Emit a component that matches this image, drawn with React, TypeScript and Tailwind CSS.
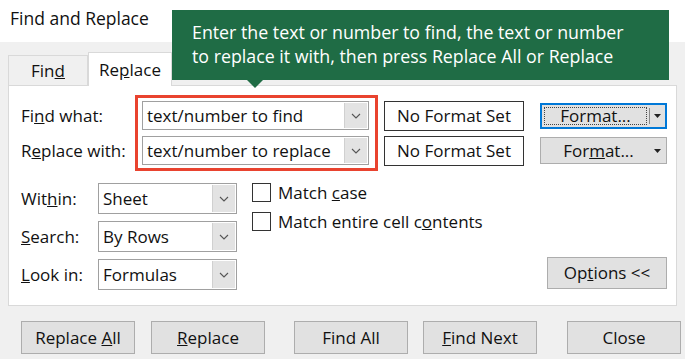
import React from 'react';

function Chevron() {
  return (
    <svg width="10" height="6" viewBox="0 0 10 6" className="block">
      <polyline points="1,1 5,5 9,1" fill="none" stroke="#555" strokeWidth="1.1" />
    </svg>
  );
}

function Caret() {
  return (
    <svg width="7" height="4" viewBox="0 0 7 4" className="block">
      <polygon points="0,0 7,0 3.5,4" fill="#222" />
    </svg>
  );
}

function Combo({ text, w, h }: { text: string; w: string; h: string }) {
  return (
    <div className={`flex ${w} ${h} bg-white border border-[#a0a0a0]`}>
      <div className="flex-1 flex items-center pl-[4px]">{text}</div>
      <div className="w-[23px] m-px bg-[#e3e3e3] border-l border-[#d0d0d0] flex items-center justify-center">
        <Chevron />
      </div>
    </div>
  );
}

function Btn({ children, className = '' }: { children: React.ReactNode; className?: string }) {
  return (
    <div className={`flex items-center justify-center bg-[#e1e1e1] border border-[#adadad] ${className}`}>
      <span>{children}</span>
    </div>
  );
}

export default function App() {
  return (
    <div className="relative w-[685px] h-[359px] overflow-hidden bg-[#f0f0f0] text-[#111] font-['Open_Sans',sans-serif] text-[17px]">
      {/* Title */}
      <div className="h-[42px] bg-white pl-[10px] pt-[5px] text-[17.5px] leading-[26px]">Find and Replace</div>

      {/* Tabs */}
      <div className="flex items-end h-[43px] px-[8px]">
        <div className="w-[80px] h-[30px] border border-b-0 border-[#d9d9d9] bg-[#f0f0f0] flex items-center justify-center">
          <span>
            Fin<u>d</u>
          </span>
        </div>
        <div className="relative z-10 -mb-px w-[84px] h-[34px] border border-b-0 border-[#d9d9d9] bg-white flex items-center justify-center">
          <span>
            Re<u>p</u>lace
          </span>
        </div>
      </div>

      {/* Panel */}
      <div className="mx-[8px] w-[669px] h-[221px] bg-white border border-[#d9d9d9] pt-[9px] pl-[12px]">
        <div className="flex">
          <div className="w-[114px] flex flex-col gap-[6px] pt-[6px]">
            <div className="h-[29px] leading-[29px]">
              Fi<u>n</u>d what:
            </div>
            <div className="h-[29px] leading-[29px]">
              R<u>e</u>place with:
            </div>
          </div>
          <div className="w-[243px] h-[76px] border-[3px] border-[#e9432f] pl-[4px] pt-[3px] flex flex-col gap-[6px]">
            <Combo text="text/number to find" w="w-[227px]" h="h-[29px]" />
            <Combo text="text/number to replace" w="w-[227px]" h="h-[29px]" />
          </div>
          <div className="ml-[6px] pt-[6px] flex flex-col gap-[5px]">
            <div className="w-[140px] h-[30px] border border-[#333] bg-white flex items-center justify-center">No Format Set</div>
            <div className="w-[140px] h-[30px] border border-[#333] bg-white flex items-center justify-center">No Format Set</div>
          </div>
          <div className="ml-[16px] pt-[8px] flex flex-col gap-[8px]">
            <div className="w-[127px] h-[26px] border-2 border-[#0078d7] bg-[#e1e1e1] flex">
              <div className="flex-1 m-[2px] border border-dotted border-[#444] flex items-center justify-center">Format...</div>
              <div className="w-px bg-[#8a8a8a] my-[3px]" />
              <div className="w-[15px] flex items-center justify-center">
                <Caret />
              </div>
            </div>
            <div className="w-[127px] h-[27px] border border-[#adadad] bg-[#e1e1e1] flex">
              <div className="flex-1 flex items-center justify-center pl-[8px]">
                <span>
                  For<u>m</u>at...
                </span>
              </div>
              <div className="w-[18px] flex items-center justify-center">
                <Caret />
              </div>
            </div>
          </div>
        </div>

        <div className="flex mt-[12px]">
          <div className="w-[77px] flex flex-col gap-[7px]">
            <div className="h-[31px] leading-[31px]">
              Wit<u>h</u>in:
            </div>
            <div className="h-[31px] leading-[31px]">
              <u>S</u>earch:
            </div>
            <div className="h-[31px] leading-[31px]">
              <u>L</u>ook in:
            </div>
          </div>
          <div className="flex flex-col gap-[7px]">
            <Combo text="Sheet" w="w-[139px]" h="h-[31px]" />
            <Combo text="By Rows" w="w-[139px]" h="h-[31px]" />
            <Combo text="Formulas" w="w-[139px]" h="h-[31px]" />
          </div>
          <div className="ml-[15px] flex flex-col gap-[10px]">
            <div className="flex items-center h-[19px]">
              <div className="w-[19px] h-[19px] border border-[#333] bg-white" />
              <span className="ml-[7px]">
                Match <u>c</u>ase
              </span>
            </div>
            <div className="flex items-center h-[19px]">
              <div className="w-[19px] h-[19px] border border-[#333] bg-white" />
              <span className="ml-[7px]">
                Match entire cell c<u>o</u>ntents
              </span>
            </div>
          </div>
          <div className="flex-1 flex justify-end items-end pr-[9px] pb-[1px]">
            <Btn className="w-[120px] h-[32px]">
              Op<u>t</u>ions &lt;&lt;
            </Btn>
          </div>
        </div>
      </div>

      {/* Bottom buttons */}
      <div className="flex mt-[15px]">
        <Btn className="ml-[21px] w-[114px] h-[33px]">
          Replace <u>A</u>ll
        </Btn>
        <Btn className="ml-[16px] w-[114px] h-[33px]">
          <u>R</u>eplace
        </Btn>
        <Btn className="ml-[29px] w-[114px] h-[33px]">Find All</Btn>
        <Btn className="ml-[15px] w-[114px] h-[33px]">
          <u>F</u>ind Next
        </Btn>
        <Btn className="ml-[30px] w-[114px] h-[33px]">Close</Btn>
      </div>

      {/* Callout */}
      <div className="absolute left-[172px] top-[10px] w-[497px] h-[70px] bg-[#1f6c45] text-white text-[17.8px] leading-[24px] pl-[20px] pt-[10px]">
        <div>Enter the text or number to find, the text or number</div>
        <div>to replace it with, then press Replace All or Replace</div>
        <div className="absolute left-[75px] -bottom-[8px] w-0 h-0 border-x-[8px] border-x-transparent border-t-[8px] border-t-[#1f6c45]" />
      </div>
    </div>
  );
}
